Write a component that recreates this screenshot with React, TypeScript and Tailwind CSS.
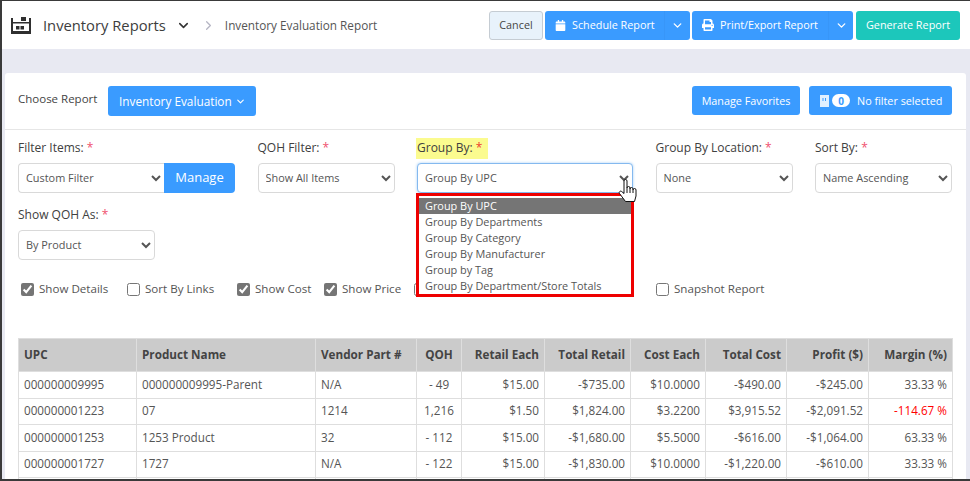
import { FaCalendar, FaPrint } from "react-icons/fa";
import { ChevronDown, ChevronRight } from "lucide-react";

const Req = () => <span className="text-[#f0506e]">*</span>;
const labelCls = "mb-[6px] block h-[18px] text-[12px] font-medium leading-[18px] text-[#404040]";

function Field({ label, value, w }: { label: string; value: string; w: string }) {
  return (
    <div className={w}>
      <label className={labelCls}>
        {label} <Req />
      </label>
      <select className="h-[30px] w-full rounded-[4px] border border-[#d9d9d9] bg-white pb-[2px] pl-[3px] text-[10.9px] text-[#555] outline-none">
        <option>{value}</option>
      </select>
    </div>
  );
}

function Check({ label, checked, w }: { label?: string; checked?: boolean; w: string }) {
  return (
    <label className={"flex items-center gap-[5px] text-[11.6px] text-[#555] " + w}>
      <input type="checkbox" defaultChecked={checked} className="m-0 size-[13px] accent-[#757575]" />
      {label}
    </label>
  );
}

const rows = [
  ["000000009995", "000000009995-Parent", "N/A", "- 49", "$15.00", "-$735.00", "$10.0000", "-$490.00", "-$245.00", "33.33 %"],
  ["000000001223", "07", "1214", "1,216", "$1.50", "$1,824.00", "$3.2200", "$3,915.52", "-$2,091.52", "-114.67 %"],
  ["000000001253", "1253 Product", "32", "- 112", "$15.00", "-$1,680.00", "$5.5000", "-$616.00", "-$1,064.00", "63.33 %"],
  ["000000001727", "1727", "N/A", "- 122", "$15.00", "-$1,830.00", "$10.0000", "-$1,220.00", "-$610.00", "33.33 %"],
  ["", "", "", "", "", "", "", "", "", ""],
];
const heads = ["UPC", "Product Name", "Vendor Part #", "QOH", "Retail Each", "Total Retail", "Cost Each", "Total Cost", "Profit ($)", "Margin (%)"];
const widths = ["w-[118px]", "w-[179px]", "w-[101px]", "w-[45px]", "w-[83px]", "w-[86px]", "w-[75px]", "w-[81px]", "w-[82px]", "w-[84px]"];
const options = ["Group By UPC", "Group By Departments", "Group By Category", "Group By Manufacturer", "Group by Tag", "Group By Department/Store Totals"];

const btn = "flex h-[29px] items-center rounded-[3px] bg-[#3a9bff] text-[10.8px] text-white";

export default function App() {
  return (
    <div className="relative flex h-[481px] w-[970px] flex-col overflow-hidden border-t border-b-2 border-l-2 border-[#3a3a3a] bg-[#e8e9f2] font-['Open_Sans',sans-serif]">
      <header className="flex h-[48px] shrink-0 items-center bg-white pr-[10px]">
        <svg width="20" height="17" viewBox="0 0 20 17" className="ml-[9px] mt-[1px]" fill="#2f2f2f">
          <path d="M0 1h2v16H0zM18 1h2v16h-2zM2 14h16v3H2z" />
          <path d="M2 5h16v1.500H2z" />
          <path d="M10 0h5v4h-5z" />
          <path d="M5 9h3.500v3.500H5zM9.500 9h3.500v3.500H9.500z" />
        </svg>
        <span className="ml-[12px] text-[14.75px] text-[#3d3d3d]">Inventory Reports</span>
        <ChevronDown size={15} strokeWidth={2.5} className="ml-[10px] text-[#333]" />
        <ChevronRight size={15} strokeWidth={2} className="ml-[10px] text-[#b5b5c3]" />
        <span className="ml-[9px] mt-[1px] text-[11.75px] text-[#555]">Inventory Evaluation Report</span>
        <div className="ml-auto flex items-center">
          <button className="h-[29px] w-[54px] rounded-[3px] border border-[#c5ccd3] bg-[#e8f2fb] pt-[1px] text-[10.8px] text-[#444]">Cancel</button>
          <div className={btn + " ml-[2px] w-[145px]"}>
            <FaCalendar size={11} className="ml-[10px]" />
            <span className="ml-[6px] pt-[1px]">Schedule Report</span>
            <span className="ml-auto flex h-full w-[26px] items-center justify-center border-l border-[#3896f8]">
              <ChevronDown size={13} strokeWidth={2.5} />
            </span>
          </div>
          <div className={btn + " ml-[2px] w-[161px]"}>
            <FaPrint size={12} className="ml-[10px]" />
            <span className="ml-[6px] pt-[1px]">Print/Export Report</span>
            <span className="ml-auto flex h-full w-[25px] items-center justify-center border-l border-[#3896f8]">
              <ChevronDown size={13} strokeWidth={2.5} />
            </span>
          </div>
          <button className="ml-[3px] h-[29px] w-[104px] rounded-[3px] bg-[#1cc7bb] pt-[1px] text-[10.85px] text-white">Generate Report</button>
        </div>
      </header>

      <main className="ml-[3px] mr-[4px] mt-[24px] flex-1 rounded-t-[3px] bg-white">
        <div className="flex h-[57px] items-start border-b border-[#e6e6e6] pl-[13px] pr-[14px] pt-[13px]">
          <span className="mt-[4px] text-[11.5px] text-[#444]">Choose Report</span>
          <button className="ml-[11px] flex h-[30px] w-[148px] items-center justify-center gap-[3px] rounded-[3px] bg-[#3a9bff] pt-[1px] text-[11.8px] text-white">
            Inventory Evaluation <ChevronDown size={11} strokeWidth={2.5} />
          </button>
          <button className={btn + " ml-auto w-[108px] justify-center pt-[1px]"}>Manage Favorites</button>
          <div className={btn + " ml-[9px] w-[143px]"}>
            <svg width="9" height="12" viewBox="0 0 9 12" fill="#fff" className="ml-[11px]">
              <path d="M0 0h9v12H0z" opacity="0.85" />
              <path d="M2.500 3h1v3h-1zM5 3h1v3H5z" fill="#3a9bff" />
            </svg>
            <span className="ml-[3px] flex h-[13px] w-[18px] items-center justify-center rounded-full bg-white text-[10px] font-bold leading-none text-[#3a9bff]">0</span>
            <span className="ml-[7px] pt-[1px]">No filter selected</span>
          </div>
        </div>

        <div className="flex flex-wrap gap-x-[22.5px] gap-y-[13px] pl-[13px] pt-[9px]">
          <div className="w-[217px]">
            <label className={labelCls}>
              Filter Items: <Req />
            </label>
            <div className="flex">
              <select className="h-[30px] w-[146px] rounded-l-[4px] border border-r-0 border-[#d9d9d9] bg-white pb-[2px] pl-[3px] text-[10.9px] text-[#555] outline-none">
                <option>Custom Filter</option>
              </select>
              <button className="h-[30px] w-[71px] rounded-r-[4px] bg-[#3a9bff] text-[13px] text-white">Manage</button>
            </div>
          </div>
          <Field label="QOH Filter:" value="Show All Items" w="w-[137px]" />
          <div className="relative w-[216px]">
            <label className={labelCls}>
              <span className="-ml-[1px] -mt-[1px] inline-block h-[21px] bg-[#fbfb8f] pl-[1px] pr-[6px] leading-[20px]">
                Group By: <span className="text-[#ef3b2d]">*</span>
              </span>
            </label>
            <select className="h-[30px] w-full rounded-[4px] border border-[#84b9ef] bg-white pb-[2px] pl-[3px] text-[10.9px] text-[#555] shadow-[0_0_3px_#a6cff5] outline-none">
              <option>Group By UPC</option>
            </select>
          </div>
          <Field label="Group By Location:" value="None" w="w-[137px]" />
          <Field label="Sort By:" value="Name Ascending" w="w-[137px]" />
          <Field label="Show QOH As:" value="By Product" w="w-[137px]" />
        </div>

        <div className="ml-[16px] mt-[21px] flex h-[16px] items-center">
          <Check label="Show Details" checked w="w-[106px]" />
          <Check label="Sort By Links" w="w-[110px]" />
          <Check label="Show Cost" checked w="w-[87px]" />
          <Check label="Show Price" checked w="w-[90px]" />
          <Check w="w-[242px]" />
          <Check label="Snapshot Report" w="w-[120px]" />
        </div>

        <table className="ml-[13px] mt-[41px] w-[934px] table-fixed border-collapse text-[11.7px] text-[#555]">
          <colgroup>
            {widths.map((w, i) => <col key={i} className={w} />)}
          </colgroup>
          <thead>
            <tr className="h-[33px] bg-[#cbcbcb]">
              {heads.map((h, i) => (
                <th key={h} className={"border border-[#dedede] px-[5px] font-bold text-[#444] " + (i < 3 ? "text-left" : i === 3 ? "text-center" : "text-right")}>{h}</th>
              ))}
            </tr>
          </thead>
          <tbody>
            {rows.map((r, ri) => (
              <tr key={ri} className="h-[26.5px]">
                {r.map((c, i) => (
                  <td key={i} className={"border border-[#dedede] px-[5px] " + (i < 3 ? "text-left" : i === 3 ? "text-center" : "text-right") + (c === "-114.67 %" ? " text-[#ff0000]" : "")}>{c}</td>
                ))}
              </tr>
            ))}
          </tbody>
        </table>
      </main>

      <div className="absolute left-[414px] top-[192px] w-[218px] border-[3px] border-[#ee0000] bg-white pt-[2px] text-[10.9px] leading-[16px] text-[#555]">
        {options.map((o, i) => (
          <div key={o} className={"pl-[6px] " + (i === 0 ? "bg-[#757575] text-white" : "")}>{o}</div>
        ))}
      </div>

      <svg width="20" height="25" viewBox="0 0 20 25" className="absolute left-[616px] top-[177px]" fill="#fff" stroke="#111" strokeWidth="1" strokeLinejoin="round">
        <path d="M6 3a1.500 1.500 0 0 1 3 0v7a1.500 1.500 0 0 1 3 0v1a1.500 1.500 0 0 1 3 0v1a1.500 1.500 0 0 1 3 0v6l-1.500 5.500H7.500L1.500 15.500a1.500 1.500 0 0 1 2.200-2L6 15.500z" />
        <path d="M9 10v5M12 11v4M15 12v3" fill="none" />
      </svg>
    </div>
  );
}
